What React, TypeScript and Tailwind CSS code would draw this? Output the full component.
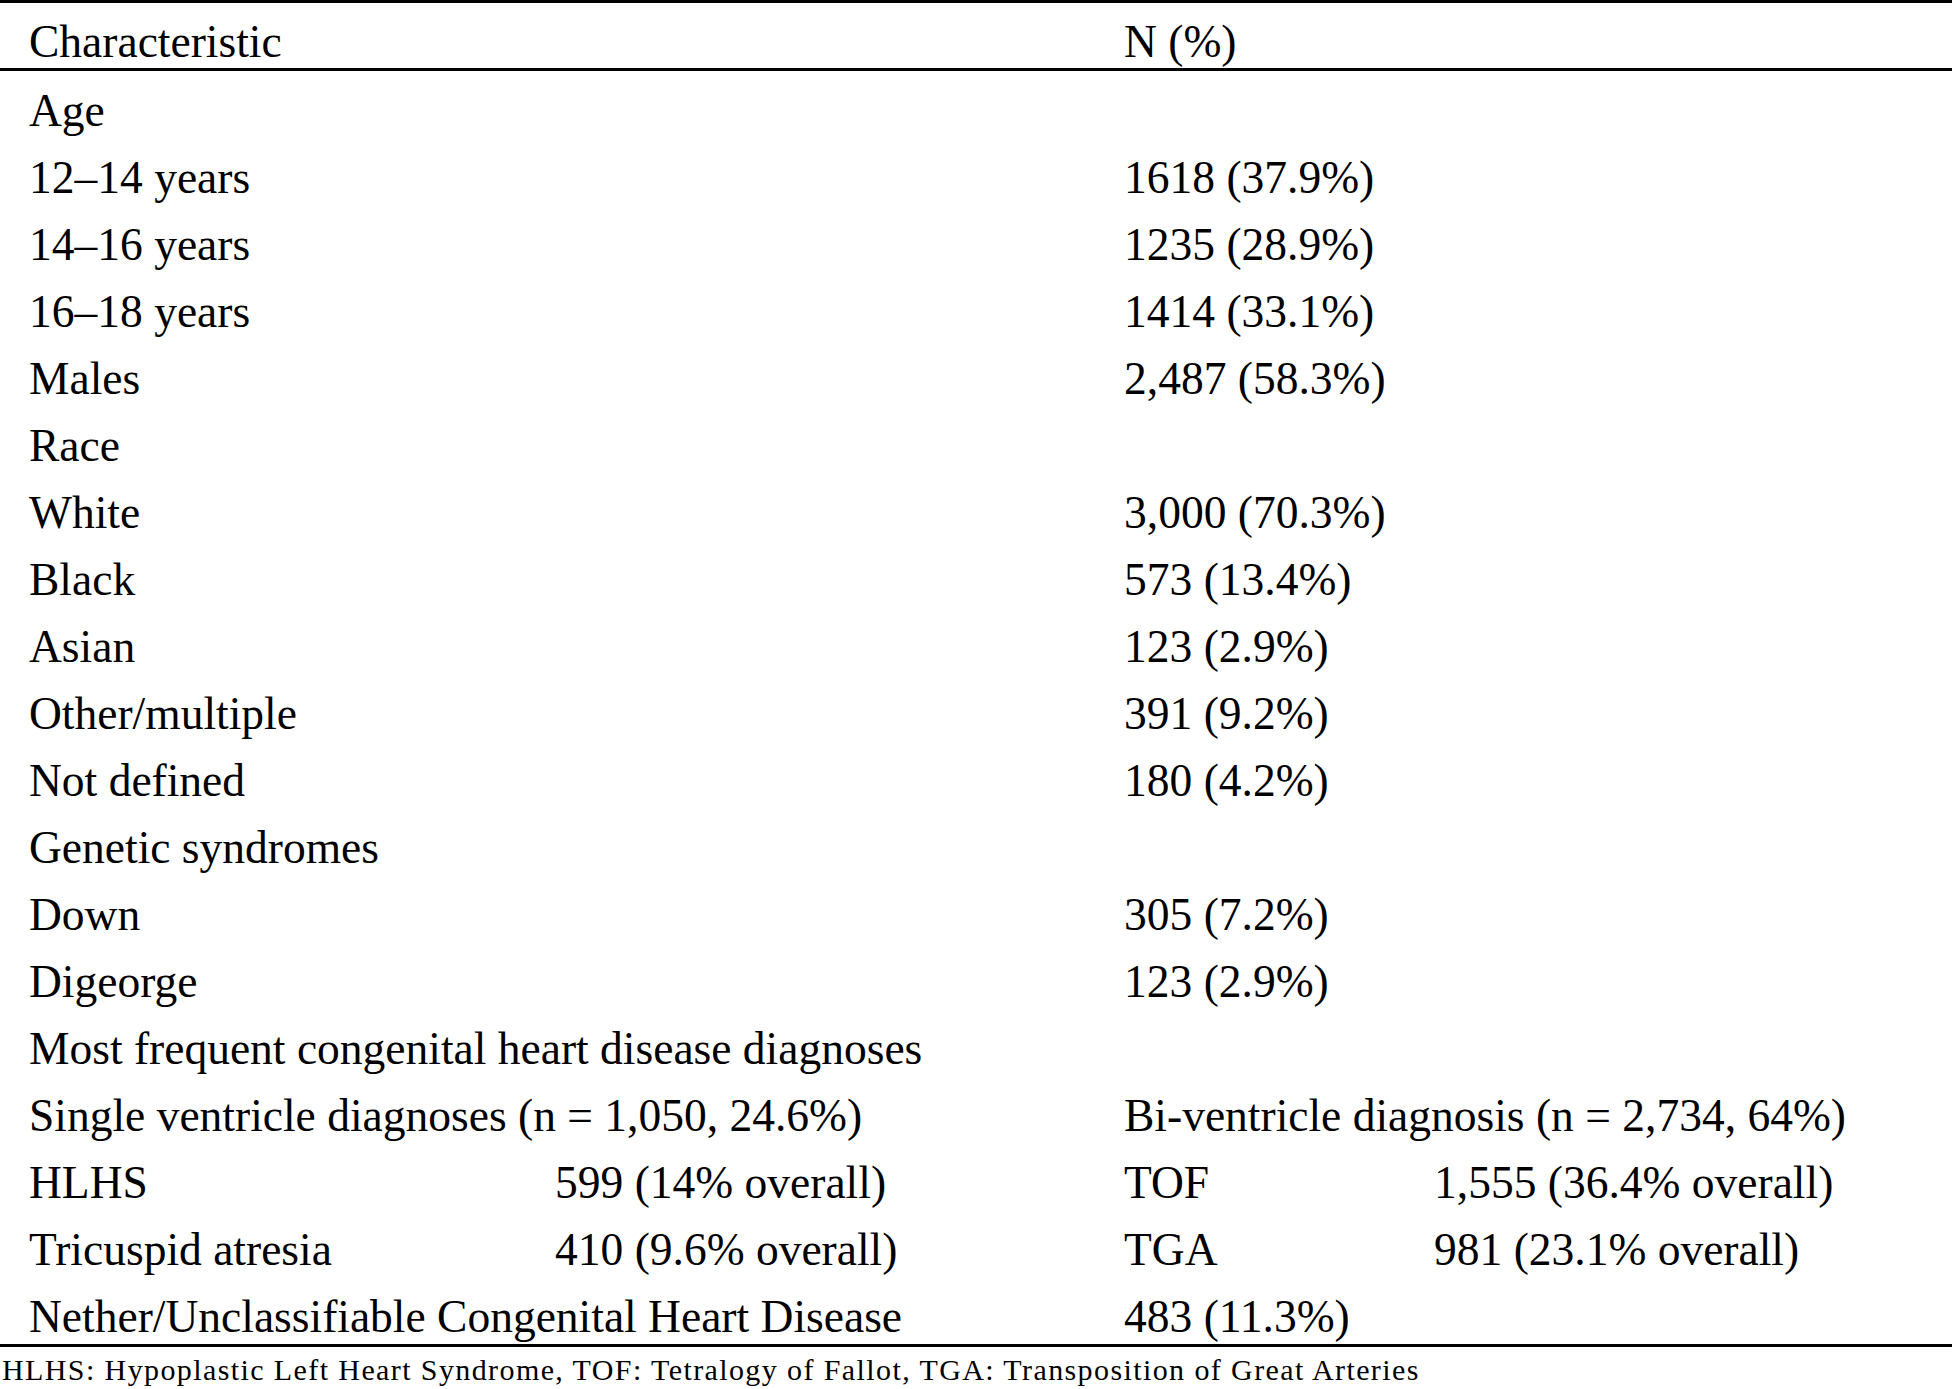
// App.tsx — patient characteristics table
type Row = { label: string; value?: string; sub?: [string, string, string, string] };

const rows: Row[] = [
  { label: 'Age' },
  { label: '12–14 years', value: '1618 (37.9%)' },
  { label: '14–16 years', value: '1235 (28.9%)' },
  { label: '16–18 years', value: '1414 (33.1%)' },
  { label: 'Males', value: '2,487 (58.3%)' },
  { label: 'Race' },
  { label: 'White', value: '3,000 (70.3%)' },
  { label: 'Black', value: '573 (13.4%)' },
  { label: 'Asian', value: '123 (2.9%)' },
  { label: 'Other/multiple', value: '391 (9.2%)' },
  { label: 'Not defined', value: '180 (4.2%)' },
  { label: 'Genetic syndromes' },
  { label: 'Down', value: '305 (7.2%)' },
  { label: 'Digeorge', value: '123 (2.9%)' },
  { label: 'Most frequent congenital heart disease diagnoses' },
  { label: 'Single ventricle diagnoses (n = 1,050, 24.6%)', value: 'Bi-ventricle diagnosis (n = 2,734, 64%)' },
  { label: '', sub: ['HLHS', '599 (14% overall)', 'TOF', '1,555 (36.4% overall)'] },
  { label: '', sub: ['Tricuspid atresia', '410 (9.6% overall)', 'TGA', '981 (23.1% overall)'] },
  { label: 'Nether/Unclassifiable Congenital Heart Disease', value: '483 (11.3%)' },
];

// grid columns: label | sub value | right label | right sub value
const cols = 'grid grid-cols-[526px_569px_310px_1fr] pl-[29px]';

function TableRow({ row }: { row: Row }) {
  if (row.sub) {
    return (
      <div className={`${cols} h-[67px] pt-[12px] leading-[55px]`}>
        {row.sub.map((t, i) => (
          <div key={i} className="whitespace-nowrap">{t}</div>
        ))}
      </div>
    );
  }
  return (
    <div className={`${cols} h-[67px] pt-[12px] leading-[55px]`}>
      <div className="col-span-2 whitespace-nowrap">{row.label}</div>
      <div className="col-span-2 whitespace-nowrap">{row.value ?? ''}</div>
    </div>
  );
}

export default function App() {
  return (
    <div className="h-screen overflow-hidden bg-white text-black font-['Liberation_Serif','Times_New_Roman',serif]">
      <div className="text-[45.5px]">
        {/* header */}
        <div className="border-t-[3px] border-b-[3px] border-black">
          <div className={`${cols} h-[65px] pt-[12px] leading-[53px]`}>
            <div className="col-span-2">Characteristic</div>
            <div className="col-span-2">N (%)</div>
          </div>
        </div>

        {/* body */}
        <div className="border-b-[3px] border-black">
          {rows.map((r, i) => (
            <TableRow key={i} row={r} />
          ))}
        </div>
      </div>

      {/* footnote */}
      <div className="pt-[4px] pl-[2px] text-[30px] leading-[38px] tracking-[1.4px] whitespace-nowrap">
        HLHS: Hypoplastic Left Heart Syndrome, TOF: Tetralogy of Fallot, TGA: Transposition of Great Arteries
      </div>
    </div>
  );
}
